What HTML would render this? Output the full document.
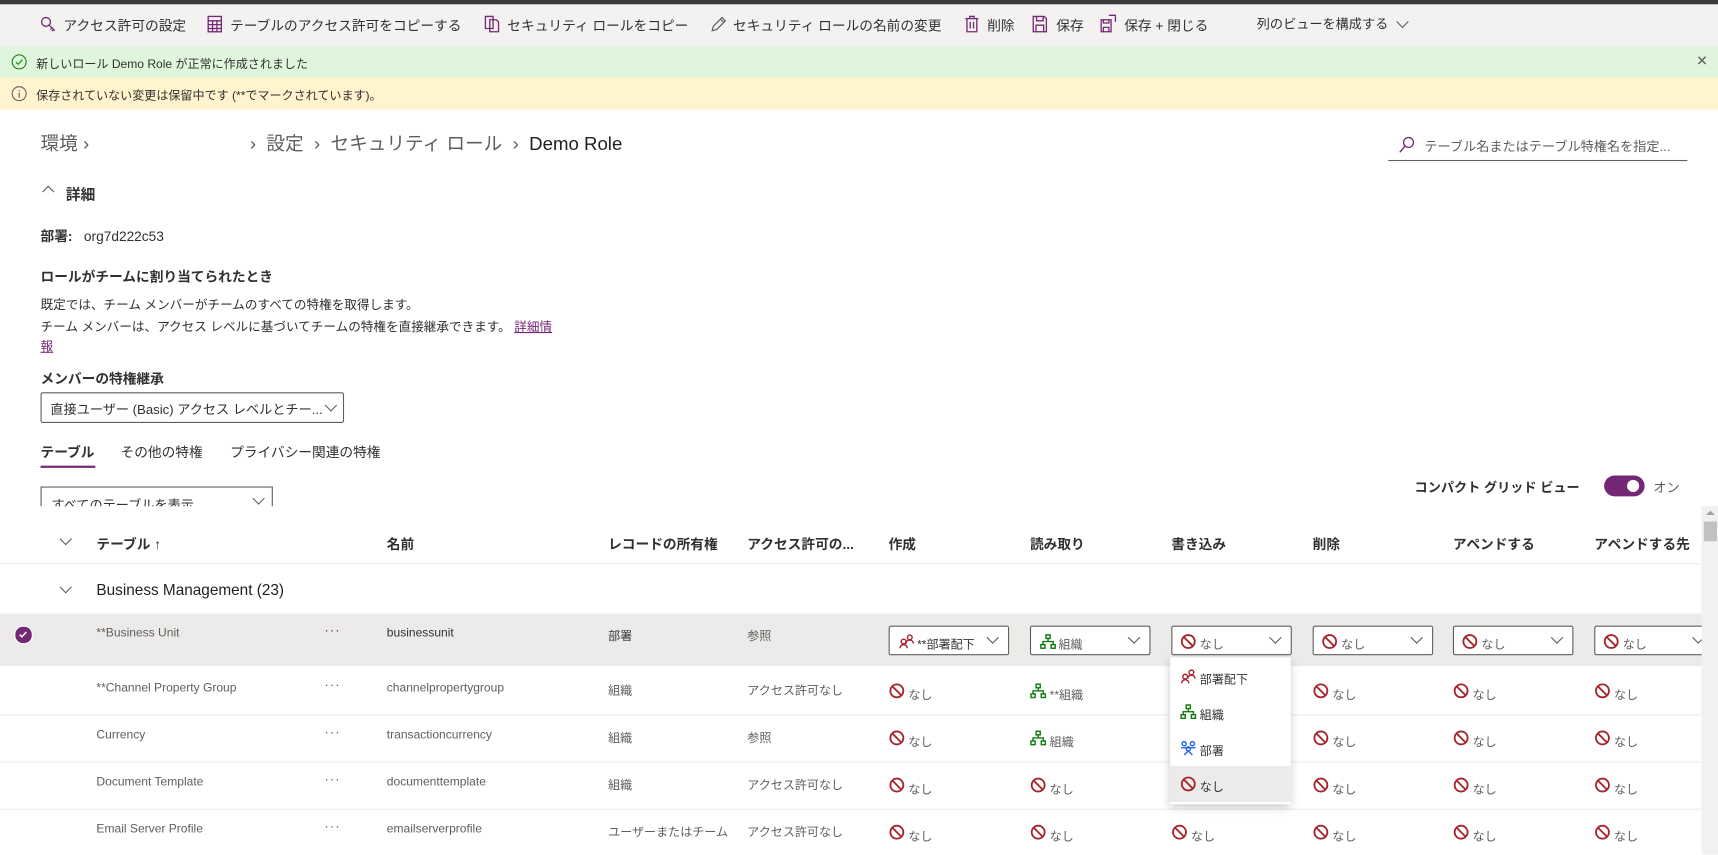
<!DOCTYPE html>
<html><head><meta charset="utf-8"><style>
html,body{margin:0;padding:0;overflow:hidden;background:#fff}
#w{position:absolute;left:0;top:0;width:1568px;height:780px;transform:scale(1.0957);transform-origin:0 0;font-family:"Liberation Sans","Noto Sans CJK JP",sans-serif;color:#323130;overflow:hidden}
.a{position:absolute;white-space:nowrap}
.cmd{font-size:12.5px;color:#323130;top:13px}
.sm{font-size:11px;color:#605e5c}
.b{font-weight:bold}
.dd{position:absolute;border:1px solid #605e5c;border-radius:2px;background:#fff;height:27px;box-sizing:border-box}
.chev{position:absolute;width:7px;height:7px;border-right:1px solid #605e5c;border-bottom:1px solid #605e5c;transform:rotate(45deg)}
.ic{position:absolute;width:15px;height:15px}
.hd{font-size:12.5px;font-weight:bold;top:486px}
.sep{position:absolute;left:0;width:1553px;height:1px;background:#edebe9}
.dots{color:#605e5c;font-size:12px;letter-spacing:1px}
.bc{font-size:17px;color:#605e5c;top:117px}
</style></head><body><div id="w">
<svg width="0" height="0" style="position:absolute">
<defs>
<symbol id="no" viewBox="0 0 16 16"><circle cx="8" cy="8" r="6.3" fill="none" stroke="#a4262c" stroke-width="1.8"/><line x1="3.7" y1="3.7" x2="12.3" y2="12.3" stroke="#a4262c" stroke-width="1.8"/></symbol>
<symbol id="org" viewBox="0 0 16 16"><g fill="none" stroke="#107c10" stroke-width="1.4"><rect x="6" y="1.5" width="4" height="3.5"/><rect x="1" y="11" width="4" height="3.5"/><rect x="11" y="11" width="4" height="3.5"/><path d="M8 5v3M3 11V8h10v3"/></g></symbol>
<symbol id="bu" viewBox="0 0 16 16"><g fill="none" stroke="#a4262c" stroke-width="1.4"><circle cx="11" cy="4" r="2.3"/><path d="M7.5 10c0-2 1.5-3.3 3.5-3.3s3.5 1.3 3.5 3.3"/><circle cx="5" cy="8" r="2.3"/><path d="M1.5 14.5c0-2 1.5-3.5 3.5-3.5s3.5 1.5 3.5 3.5"/></g></symbol>
<symbol id="bl" viewBox="0 0 16 16"><g fill="none" stroke="#2266e3" stroke-width="1.4"><circle cx="4" cy="4" r="2"/><circle cx="12" cy="4" r="2"/><circle cx="8" cy="9" r="2"/><path d="M1 8h14M4 15l4-4 4 4"/></g></symbol>
</defs></svg>

<div class="a" style="left:0;top:0;width:1568px;height:4px;background:#3b3a39"></div>
<div class="a" style="left:0;top:4px;width:1568px;height:38px;background:#f3f2f1"></div>
<svg class="a" style="left:36px;top:14px" width="16" height="16" viewBox="0 0 16 16"><g fill="none" stroke="#742774" stroke-width="1.2"><circle cx="6" cy="6" r="4"/><path d="M9 9l5 5M11.5 11.5l-1.5 1.5M13 13l-1.5 1.5"/></g></svg>
<div class="a cmd" style="left:58px">アクセス許可の設定</div>
<svg class="a" style="left:189px;top:14px" width="14" height="16" viewBox="0 0 14 16"><g fill="none" stroke="#742774" stroke-width="1.2"><rect x="1" y="1" width="12" height="14"/><path d="M1 5h12M1 8.5h12M1 12h12M5 5v10M9 5v10"/></g></svg>
<div class="a cmd" style="left:210px">テーブルのアクセス許可をコピーする</div>
<svg class="a" style="left:442px;top:14px" width="14" height="16" viewBox="0 0 14 16"><g fill="none" stroke="#742774" stroke-width="1.2"><path d="M1 1h7v11H1z"/><path d="M5 4h6l2 2v9H5z"/></g></svg>
<div class="a cmd" style="left:463px">セキュリティ ロールをコピー</div>
<svg class="a" style="left:648px;top:14px" width="16" height="16" viewBox="0 0 16 16"><path d="M2 14l1-4 8-8 3 3-8 8z M9.5 3.5l3 3" fill="none" stroke="#605e5c" stroke-width="1.1"/></svg>
<div class="a cmd" style="left:669px">セキュリティ ロールの名前の変更</div>
<svg class="a" style="left:880px;top:14px" width="14" height="16" viewBox="0 0 14 16"><g fill="none" stroke="#742774" stroke-width="1.2"><path d="M1 3h12M5 3V1h4v2M2.5 3v12h9V3M5.5 6v6M8.5 6v6"/></g></svg>
<div class="a cmd" style="left:901px">削除</div>
<svg class="a" style="left:942px;top:14px" width="14" height="16" viewBox="0 0 14 16"><g fill="none" stroke="#742774" stroke-width="1.2"><path d="M1 1h10l2 2v12H1z M4 1v4h6V1 M3.5 15V9h7v6"/></g></svg>
<div class="a cmd" style="left:964px">保存</div>
<svg class="a" style="left:1004px;top:13px" width="16" height="17" viewBox="0 0 16 17"><g fill="none" stroke="#742774" stroke-width="1.2"><path d="M1 5h9v11H1z M3 5v3h5V5 M3 16v-4h5v4 M8 1h6v6"/></g></svg>
<div class="a cmd" style="left:1026px">保存 + 閉じる</div>
<div class="a cmd" style="left:1147px;font-size:12px">列のビューを構成する</div>
<div class="chev" style="left:1276px;top:16px"></div>

<div class="a" style="left:0;top:42px;width:1568px;height:29px;background:#dff6dd"></div>
<svg class="a" style="left:10px;top:49px" width="15" height="15" viewBox="0 0 16 16"><circle cx="8" cy="8" r="6.8" fill="none" stroke="#107c10" stroke-width="1"/><path d="M4.8 8.2l2.2 2.2 4.2-4.6" fill="none" stroke="#107c10" stroke-width="1"/></svg>
<div class="a" style="left:33px;top:50px;font-size:11px;color:#323130">新しいロール Demo Role が正常に作成されました</div>
<div class="a" style="left:1548px;top:48px;font-size:13px;color:#605e5c">✕</div>
<div class="a" style="left:0;top:71px;width:1568px;height:29px;background:#fff4ce"></div>
<svg class="a" style="left:10px;top:78px" width="15" height="15" viewBox="0 0 16 16"><circle cx="8" cy="8" r="6.8" fill="none" stroke="#605e5c" stroke-width="1"/><path d="M8 7v5M8 4.5v1" stroke="#605e5c" stroke-width="1.1"/></svg>
<div class="a" style="left:33px;top:79px;font-size:11px;color:#323130">保存されていない変更は保留中です (**でマークされています)。</div>

<div class="a bc" style="left:37px">環境 ›</div>
<div class="a bc" style="left:228px">›&nbsp; 設定 &nbsp;›&nbsp; セキュリティ ロール &nbsp;›&nbsp; <span style="color:#201f1e">Demo Role</span></div>
<svg class="a" style="left:1276px;top:124px" width="16" height="17" viewBox="0 0 16 17"><circle cx="9.5" cy="6" r="4.5" fill="none" stroke="#742774" stroke-width="1.2"/><path d="M6.3 9.3L1.5 15" stroke="#742774" stroke-width="1.2"/></svg>
<div class="a" style="left:1300px;top:125px;font-size:12px;color:#605e5c">テーブル名またはテーブル特権名を指定...</div>
<div class="a" style="left:1267px;top:146px;width:273px;height:1px;background:#605e5c"></div>

<div class="chev" style="left:40px;top:171px;transform:rotate(225deg)"></div>
<div class="a b" style="left:60px;top:166px;font-size:13.5px">詳細</div>
<div class="a" style="left:37px;top:205px;font-size:12.5px"><b>部署:</b>&nbsp;&nbsp;&nbsp;org7d222c53</div>
<div class="a b" style="left:37px;top:242px;font-size:12.5px">ロールがチームに割り当てられたとき</div>
<div class="a" style="left:37px;top:270px;font-size:11.5px;color:#323130">既定では、チーム メンバーがチームのすべての特権を取得します。</div>
<div class="a" style="left:37px;top:290px;font-size:11.5px;color:#323130">チーム メンバーは、アクセス レベルに基づいてチームの特権を直接継承できます。 <span style="color:#742774;text-decoration:underline">詳細情</span></div>
<div class="a" style="left:37px;top:308px;font-size:11.5px;color:#742774;text-decoration:underline">報</div>
<div class="a b" style="left:37px;top:335px;font-size:12.5px">メンバーの特権継承</div>
<div class="dd" style="left:37px;top:358px;width:277px;height:28px"></div>
<div class="a" style="left:46px;top:365px;font-size:12px">直接ユーザー (Basic) アクセス レベルとチー...</div>
<div class="chev" style="left:298px;top:366px"></div>

<div class="a b" style="left:37px;top:402px;font-size:12.5px">テーブル</div>
<div class="a" style="left:37px;top:425px;width:50px;height:2px;background:#742774"></div>
<div class="a" style="left:110px;top:402px;font-size:12.5px">その他の特権</div>
<div class="a" style="left:210px;top:402px;font-size:12.5px">プライバシー関連の特権</div>
<div class="a" style="left:37px;top:444px;width:212px;height:18px;border:1px solid #605e5c;border-bottom:none;box-sizing:border-box;overflow:hidden"><div style="position:absolute;left:9px;top:7px;font-size:12px">すべてのテーブルを表示</div></div>
<div class="chev" style="left:232px;top:451px"></div>

<div class="a b" style="left:1291px;top:436px;font-size:12px">コンパクト グリッド ビュー</div>
<div class="a" style="left:1464px;top:434px;width:37px;height:19px;border-radius:10px;background:#742774"></div>
<div class="a" style="left:1485px;top:438px;width:11px;height:11px;border-radius:6px;background:#fff"></div>
<div class="a" style="left:1509px;top:436px;font-size:12px;color:#605e5c">オン</div>

<div class="a" style="left:1553px;top:462px;width:15px;height:318px;background:#f1f1f1"></div>
<div class="a" style="left:1557px;top:466px;width:0;height:0;border-left:4px solid transparent;border-right:4px solid transparent;border-bottom:4px solid #a0a0a0"></div>
<div class="a" style="left:1555px;top:476px;width:12px;height:18px;background:#c1c1c1"></div>

<div class="chev" style="left:56px;top:488px"></div>
<div class="a hd" style="left:88px">テーブル <span style="font-weight:normal">↑</span></div>
<div class="a hd" style="left:353px">名前</div>
<div class="a hd" style="left:555px">レコードの所有権</div>
<div class="a hd" style="left:682px">アクセス許可の...</div>
<div class="a hd" style="left:811px">作成</div>
<div class="a hd" style="left:940px">読み取り</div>
<div class="a hd" style="left:1069px">書き込み</div>
<div class="a hd" style="left:1198px">削除</div>
<div class="a hd" style="left:1326px">アペンドする</div>
<div class="a hd" style="left:1455px">アペンドする先</div>
<div class="sep" style="top:514px"></div>

<div class="chev" style="left:56px;top:532px"></div>
<div class="a" style="left:88px;top:530px;font-size:14px;color:#201f1e">Business Management (23)</div>

<div class="a" style="left:0;top:560px;width:1553px;height:48px;background:#edebe9"></div>
<div class="a" style="left:13px;top:571px;width:15px;height:15px;border-radius:8px;background:#742774;border:1px solid #fff"></div>
<svg class="a" style="left:15px;top:573px" width="12" height="12" viewBox="0 0 12 12"><path d="M3 6.2l2 2 4-4.4" fill="none" stroke="#fff" stroke-width="1.4"/></svg>
<div class="a sm" style="left:88px;top:572px">**Business Unit</div>
<div class="a dots" style="left:296px;top:568px;color:#742774">···</div>
<div class="a sm" style="left:353px;top:572px;color:#323130">businessunit</div>
<div class="a sm" style="left:555px;top:572px;color:#323130">部署</div>
<div class="a sm" style="left:682px;top:572px">参照</div>

<div class="dd" style="left:811px;top:571px;width:110px"></div><svg class="ic" style="left:820px;top:578px"><use href="#bu"/></svg><div class="a sm" style="left:837px;top:580px;color:#323130">**部署配下</div><div class="chev" style="left:902px;top:578px"></div>
<div class="dd" style="left:940px;top:571px;width:110px"></div><svg class="ic" style="left:949px;top:578px"><use href="#org"/></svg><div class="a sm" style="left:966px;top:580px">組織</div><div class="chev" style="left:1031px;top:578px"></div>
<div class="dd" style="left:1069px;top:571px;width:110px"></div><svg class="ic" style="left:1077px;top:578px"><use href="#no"/></svg><div class="a sm" style="left:1095px;top:580px">なし</div><div class="chev" style="left:1160px;top:578px"></div>
<div class="dd" style="left:1198px;top:571px;width:110px"></div><svg class="ic" style="left:1206px;top:578px"><use href="#no"/></svg><div class="a sm" style="left:1224px;top:580px">なし</div><div class="chev" style="left:1289px;top:578px"></div>
<div class="dd" style="left:1326px;top:571px;width:110px"></div><svg class="ic" style="left:1334px;top:578px"><use href="#no"/></svg><div class="a sm" style="left:1352px;top:580px">なし</div><div class="chev" style="left:1417px;top:578px"></div>
<div class="dd" style="left:1455px;top:571px;width:110px"></div><svg class="ic" style="left:1463px;top:578px"><use href="#no"/></svg><div class="a sm" style="left:1481px;top:580px">なし</div><div class="chev" style="left:1546px;top:578px"></div>
<div class="a" style="left:1553px;top:560px;width:15px;height:220px;background:#f1f1f1"></div>

<div class="a sm" style="left:88px;top:622px">**Channel Property Group</div>
<div class="a dots" style="left:296px;top:618px">···</div>
<div class="a sm" style="left:353px;top:622px">channelpropertygroup</div>
<div class="a sm" style="left:555px;top:622px">組織</div>
<div class="a sm" style="left:682px;top:622px">アクセス許可なし</div>
<svg class="ic" style="left:811px;top:623px"><use href="#no"/></svg><div class="a sm" style="left:829px;top:626px">なし</div>
<svg class="ic" style="left:940px;top:623px"><use href="#org"/></svg><div class="a sm" style="left:958px;top:626px">**組織</div>
<svg class="ic" style="left:1198px;top:623px"><use href="#no"/></svg><div class="a sm" style="left:1216px;top:626px">なし</div>
<svg class="ic" style="left:1326px;top:623px"><use href="#no"/></svg><div class="a sm" style="left:1344px;top:626px">なし</div>
<svg class="ic" style="left:1455px;top:623px"><use href="#no"/></svg><div class="a sm" style="left:1473px;top:626px">なし</div>
<div class="sep" style="top:652px"></div>

<div class="a sm" style="left:88px;top:665px">Currency</div>
<div class="a dots" style="left:296px;top:661px">···</div>
<div class="a sm" style="left:353px;top:665px">transactioncurrency</div>
<div class="a sm" style="left:555px;top:665px">組織</div>
<div class="a sm" style="left:682px;top:665px">参照</div>
<svg class="ic" style="left:811px;top:666px"><use href="#no"/></svg><div class="a sm" style="left:829px;top:669px">なし</div>
<svg class="ic" style="left:940px;top:666px"><use href="#org"/></svg><div class="a sm" style="left:958px;top:669px">組織</div>
<svg class="ic" style="left:1198px;top:666px"><use href="#no"/></svg><div class="a sm" style="left:1216px;top:669px">なし</div>
<svg class="ic" style="left:1326px;top:666px"><use href="#no"/></svg><div class="a sm" style="left:1344px;top:669px">なし</div>
<svg class="ic" style="left:1455px;top:666px"><use href="#no"/></svg><div class="a sm" style="left:1473px;top:669px">なし</div>
<div class="sep" style="top:695px"></div>

<div class="a sm" style="left:88px;top:708px">Document Template</div>
<div class="a dots" style="left:296px;top:704px">···</div>
<div class="a sm" style="left:353px;top:708px">documenttemplate</div>
<div class="a sm" style="left:555px;top:708px">組織</div>
<div class="a sm" style="left:682px;top:708px">アクセス許可なし</div>
<svg class="ic" style="left:811px;top:709px"><use href="#no"/></svg><div class="a sm" style="left:829px;top:712px">なし</div>
<svg class="ic" style="left:940px;top:709px"><use href="#no"/></svg><div class="a sm" style="left:958px;top:712px">なし</div>
<svg class="ic" style="left:1198px;top:709px"><use href="#no"/></svg><div class="a sm" style="left:1216px;top:712px">なし</div>
<svg class="ic" style="left:1326px;top:709px"><use href="#no"/></svg><div class="a sm" style="left:1344px;top:712px">なし</div>
<svg class="ic" style="left:1455px;top:709px"><use href="#no"/></svg><div class="a sm" style="left:1473px;top:712px">なし</div>
<div class="sep" style="top:738px"></div>

<div class="a sm" style="left:88px;top:751px">Email Server Profile</div>
<div class="a dots" style="left:296px;top:747px">···</div>
<div class="a sm" style="left:353px;top:751px">emailserverprofile</div>
<div class="a sm" style="left:555px;top:751px">ユーザーまたはチーム</div>
<div class="a sm" style="left:682px;top:751px">アクセス許可なし</div>
<svg class="ic" style="left:811px;top:752px"><use href="#no"/></svg><div class="a sm" style="left:829px;top:755px">なし</div>
<svg class="ic" style="left:940px;top:752px"><use href="#no"/></svg><div class="a sm" style="left:958px;top:755px">なし</div>
<svg class="ic" style="left:1069px;top:752px"><use href="#no"/></svg><div class="a sm" style="left:1087px;top:755px">なし</div>
<svg class="ic" style="left:1198px;top:752px"><use href="#no"/></svg><div class="a sm" style="left:1216px;top:755px">なし</div>
<svg class="ic" style="left:1326px;top:752px"><use href="#no"/></svg><div class="a sm" style="left:1344px;top:755px">なし</div>
<svg class="ic" style="left:1455px;top:752px"><use href="#no"/></svg><div class="a sm" style="left:1473px;top:755px">なし</div>

<div class="a" style="left:1068px;top:600px;width:110px;height:134px;background:#fff;box-shadow:0 3px 8px rgba(0,0,0,.22)"></div>
<svg class="ic" style="left:1077px;top:610px"><use href="#bu"/></svg><div class="a sm" style="left:1095px;top:612px;color:#323130">部署配下</div>
<svg class="ic" style="left:1077px;top:642px"><use href="#org"/></svg><div class="a sm" style="left:1095px;top:644px;color:#323130">組織</div>
<svg class="ic" style="left:1077px;top:675px"><use href="#bl"/></svg><div class="a sm" style="left:1095px;top:677px;color:#323130">部署</div>
<div class="a" style="left:1068px;top:699px;width:110px;height:33px;background:#edebe9"></div>
<svg class="ic" style="left:1077px;top:708px"><use href="#no"/></svg><div class="a sm" style="left:1095px;top:710px;color:#323130">なし</div>
</div></body></html>
